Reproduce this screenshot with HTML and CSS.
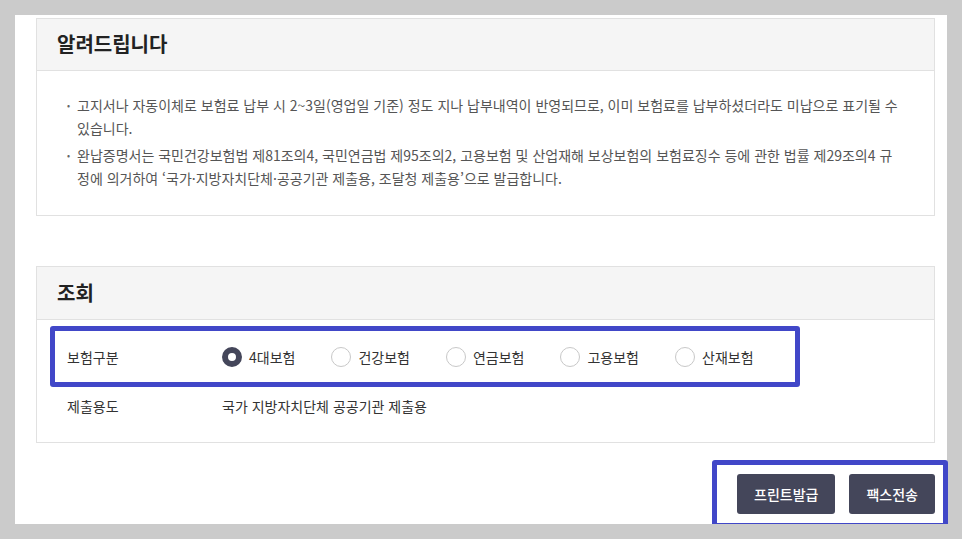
FILE: index.html
```html
<!DOCTYPE html>
<html lang="ko">

<head>
    <meta charset="UTF-8">
    <meta name="viewport" content="width=device-width, initial-scale=1.0">
    <title>완납증명서</title>
    <link rel="stylesheet" href="styles.css">
</head>

<body>
    <div id="main">
        <div class="box notice">
            <h2 class="box-title">알려드립니다</h2>
            <ul class="notice-list">
                <li><span>고지서나 자동이체로 보험료 납부 시 2~3일(영업일 기준) 정도 지나 납부내역이 반영되므로, 이미 보험료를 납부하셨더라도 미납으로 표기될 수<br>있습니다.</span></li>
                <li><span>완납증명서는 국민건강보험법 제81조의4, 국민연금법 제95조의2, 고용보험 및 산업재해 보상보험의 보험료징수 등에 관한 법률 제29조의4 규<br>정에 의거하여 ‘국가·지방자치단체·공공기관 제출용, 조달청 제출용’으로 발급합니다.</span></li>
            </ul>
        </div>

        <div class="box search">
            <h2 class="box-title">조회</h2>
            <div class="search-body">
                <div class="row">
                    <div class="row-label">보험구분</div>
                    <div class="radios">
                        <label class="radio checked"><i></i>4대보험</label>
                        <label class="radio"><i></i>건강보험</label>
                        <label class="radio"><i></i>연금보험</label>
                        <label class="radio"><i></i>고용보험</label>
                        <label class="radio"><i></i>산재보험</label>
                    </div>
                </div>
                <div class="row">
                    <div class="row-label">제출용도</div>
                    <div class="row-value">국가 지방자치단체 공공기관 제출용</div>
                </div>
                <div class="mark mark-row"></div>
            </div>
        </div>

        <div class="btn-area">
            <a class="btn" href="javascript:;">프린트발급</a>
            <a class="btn" href="javascript:;">팩스전송</a>
            <div class="mark mark-btn"></div>
        </div>
    </div>
</body>

</html>
```

FILE: styles.css
```css
* {
    margin: 0;
    padding: 0;
    box-sizing: border-box;
}

ul {
    list-style: none;
}

body {
    background: #cbcbcb;
    font-family: "Noto Sans CJK KR", "Noto Sans", sans-serif;
    color: #333;
}

#main {
    margin: 15px 15px 0 15px;
    height: 509px;
    background: #fff;
    padding: 3px 12px 0 21px;
    position: relative;
}

.box {
    border: 1px solid #e1e1e1;
}

.box-title {
    height: 52px;
    line-height: 50px;
    background: #f5f5f5;
    border-bottom: 1px solid #e1e1e1;
    padding-left: 20px;
    font-size: 20px;
    font-weight: 700;
    color: #222;
}

.notice-list {
    padding: 23px 20px 25px 30px;
    font-size: 14px;
    line-height: 23px;
    color: #555;
    white-space: nowrap;
}

.notice-list li {
    display: flex;
}

.notice-list li + li {
    margin-top: 4px;
}

.notice-list li::before {
    content: "•";
    flex: 0 0 10px;
    font-size: 9px;
    color: #666;
}

.search {
    margin-top: 50px;
}

.search .box-title {
    height: 53px;
    line-height: 51px;
}

.search-body {
    position: relative;
    padding: 12px 30px 12px 30px;
    font-size: 14px;
}

.row {
    display: flex;
    align-items: center;
    height: 49px;
}

.row-label {
    width: 155px;
    color: #333;
}

.row-value {
    color: #333;
}

.radios {
    display: flex;
    gap: 36px;
}

.radio {
    display: flex;
    align-items: center;
    gap: 7px;
    color: #333;
}

.radio i {
    width: 20px;
    height: 20px;
    border-radius: 50%;
    border: 1px solid #c8c8c8;
    background: #fff;
}

.radio.checked i {
    border: 6px solid #44465a;
}

.btn-area {
    position: relative;
    display: flex;
    justify-content: flex-end;
    gap: 14px;
    margin-top: 31px;
}

.btn {
    height: 40px;
    line-height: 40px;
    padding: 0 17px;
    background: #44465a;
    color: #fff;
    border-radius: 3px;
    font-size: 14px;
    font-weight: 500;
    text-decoration: none;
}

.mark {
    position: absolute;
    border: 5px solid #4147c8;
    border-radius: 3px;
}

.mark-row {
    top: 6px;
    left: 13px;
    width: 750px;
    height: 61px;
}

.mark-btn {
    top: -14px;
    right: -13px;
    width: 236px;
    height: 68px;
}
```
